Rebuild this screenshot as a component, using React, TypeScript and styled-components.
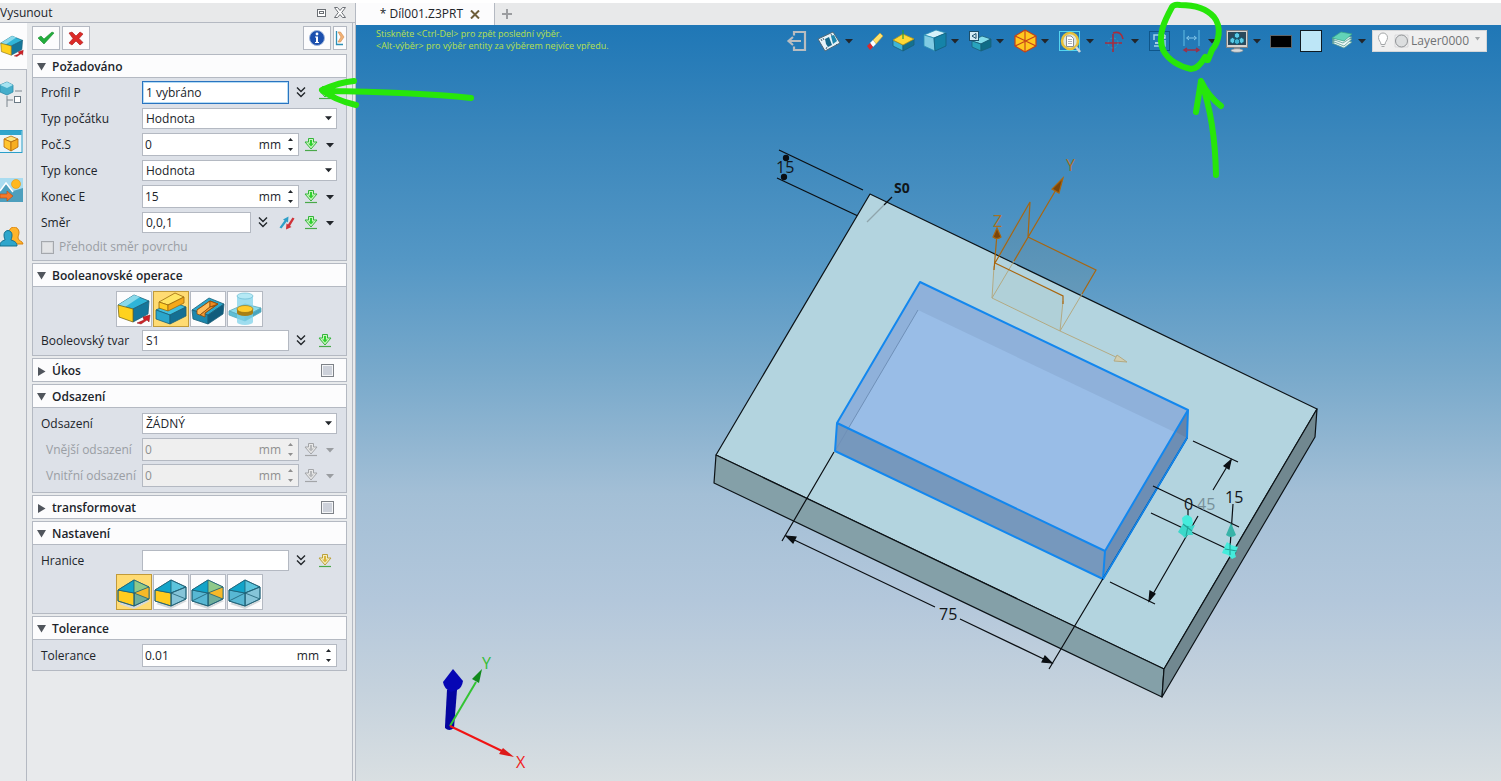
import React, { useState } from 'react';
import styled, { createGlobalStyle, css } from 'styled-components';

const GlobalStyle = createGlobalStyle`
  * { box-sizing: border-box; }
  body { margin: 0; background: #fff; }
  button, input, select { font: inherit; color: inherit; margin: 0; padding: 0; }
`;

const line = '#b4b9c2';

/* ---------- page frame ---------- */

const Page = styled.div`
  position: relative;
  display: flex;
  min-height: 100vh;
  padding-top: 3px;
  font-family: 'Open Sans', 'Noto Sans', sans-serif;
  font-size: 12px;
  line-height: 16px;
  color: #20242a;
`;

const Panel = styled.aside`
  flex: none;
  width: 356px;
  display: flex;
  flex-direction: column;
  background: #e8eaec;
  border-right: 1px solid ${line};
`;

const TitleBar = styled.header`
  display: flex;
  align-items: center;
  height: 20px;
  padding-right: 6px;
  border-bottom: 1px solid ${line};
  background: #e8e9ea;
`;

const Title = styled.h1`
  flex: 1;
  margin: 0;
  font-size: 12px;
  font-weight: 400;
`;

const BareButton = styled.button<{ $w?: number }>`
  flex: none;
  display: flex;
  align-items: center;
  justify-content: center;
  width: ${(p) => p.$w ?? 24}px;
  border: 0;
  background: none;
  cursor: pointer;
`;

const PanelMain = styled.div`
  flex: 1;
  display: flex;
`;

const Rail = styled.nav`
  flex: none;
  width: 27px;
  display: flex;
  flex-direction: column;
  border-right: 1px solid ${line};
`;

const RailTab = styled.button<{ $active?: boolean }>`
  display: flex;
  align-items: center;
  justify-content: flex-start;
  height: ${(p) => (p.$active ? 47 : 48)}px;
  border: 0;
  cursor: pointer;
  background: ${(p) => (p.$active ? '#fcfcfd' : 'transparent')};
  ${(p) => p.$active && css`margin-right: -1px; border-bottom: 1px solid ${line};`}
`;

const Form = styled.form`
  flex: 1;
  min-width: 0;
  display: flex;
  flex-direction: column;
  gap: 2px;
  margin-right: 2px;
  padding: 3px 5px;
  border-right: 1px solid ${line};
`;

const Actions = styled.div`
  display: flex;
  gap: 2px;
  height: 26px;
  padding-bottom: 2px;
`;

const ActionButton = styled.button<{ $w?: number; $push?: boolean }>`
  display: flex;
  align-items: center;
  justify-content: center;
  width: ${(p) => p.$w ?? 28}px;
  border: 1px solid ${line};
  background: #fcfcfd;
  cursor: pointer;
  ${(p) => p.$push && css`margin-left: auto;`}
`;

/* ---------- sections and fields ---------- */

const SectionBox = styled.section`
  border: 1px solid ${line};
  background: #dde1e8;
`;

const SectionHead = styled.div<{ $open: boolean }>`
  display: flex;
  align-items: center;
  height: ${(p) => (p.$open ? 23 : 22)}px;
  padding-right: 12px;
  background: #fcfcfd;
  border-bottom: ${(p) => (p.$open ? `1px solid ${line}` : '0')};
`;

const SectionToggle = styled.button`
  flex: 1;
  display: flex;
  align-items: center;
  gap: 6px;
  padding: 2px 0 0 4px;
  border: 0;
  background: none;
  font-weight: 600;
  text-align: left;
  cursor: pointer;
`;

const SectionBody = styled.div<{ $top: number; $bottom: number }>`
  display: flex;
  flex-direction: column;
  gap: 1px;
  padding: ${(p) => p.$top}px 9px ${(p) => p.$bottom}px 8px;
`;

const Row = styled.div<{ $off?: boolean }>`
  display: flex;
  align-items: center;
  height: 25px;
  color: ${(p) => (p.$off ? '#9a9ea4' : 'inherit')};
`;

const Label = styled.label<{ $indent?: boolean }>`
  flex: none;
  width: 101px;
  padding-left: ${(p) => (p.$indent ? 5 : 0)}px;
  white-space: nowrap;
`;

const fieldLook = css`
  border: 1px solid ${line};
  border-radius: 0;
  background: #fff;
  outline: none;
`;

const TextBox = styled.input<{ $active?: boolean }>`
  ${fieldLook}
  flex: 1;
  min-width: 0;
  height: ${(p) => (p.$active ? 23 : 21)}px;
  padding-left: 3px;
  ${(p) => p.$active && css`border-color: #2a74c0; box-shadow: inset 0 0 0 1px #b4dcf6;`}
`;

const SelectWrap = styled.div`
  flex: 1;
  min-width: 0;
  position: relative;
  display: flex;
  svg { position: absolute; right: 5px; top: 7px; pointer-events: none; }
`;

const SelectBox = styled.select`
  ${fieldLook}
  flex: 1;
  min-width: 0;
  height: 21px;
  padding-left: 3px;
  appearance: none;
`;

const SpinWrap = styled.div<{ $off?: boolean }>`
  ${fieldLook}
  flex: 1;
  min-width: 0;
  display: flex;
  align-items: center;
  height: 23px;
  padding: 0 2px;
  background: ${(p) => (p.$off ? '#efefef' : '#fff')};
  color: ${(p) => (p.$off ? '#8f8f8f' : 'inherit')};
`;

const SpinInput = styled.input`
  flex: 1;
  min-width: 0;
  border: 0;
  background: none;
  outline: none;
`;

const SpinButtons = styled.div`
  display: flex;
  flex-direction: column;
  gap: 2px;
  margin-left: 4px;
`;

const SpinButton = styled.button`
  display: flex;
  align-items: center;
  justify-content: center;
  width: 11px;
  height: 8px;
  border: 0;
  background: none;
`;

const CheckRow = styled.label`
  display: flex;
  align-items: center;
  gap: 5px;
  height: 22px;
  color: #9a9ea4;
`;

const Check = styled.input<{ $framed?: boolean }>`
  appearance: none;
  flex: none;
  width: 13px;
  height: 13px;
  border: 1px solid ${(p) => (p.$framed ? '#7e8288' : '#a5a8ad')};
  background: ${(p) => (p.$framed ? '#cdd1da' : '#e3e4e6')};
  box-shadow: inset 0 0 0 1px ${(p) => (p.$framed ? '#f4f5f7' : '#d6d8db')};
`;

const Choices = styled.div`
  display: flex;
  justify-content: center;
  gap: 1px;
`;

const Choice = styled.button<{ $on?: boolean }>`
  width: 36px;
  height: 36px;
  border: 1px solid ${(p) => (p.$on ? '#c19a3a' : line)};
  background: ${(p) => (p.$on ? '#ffdb73' : '#fcfcfd')};
  cursor: pointer;
  svg { display: block; }
`;

/* ---------- work area ---------- */

const Work = styled.main`
  flex: 1;
  min-width: 0;
  display: flex;
  flex-direction: column;
`;

const TabBar = styled.div`
  display: flex;
  height: 22px;
  background: #e8e9ea;
`;

const FileTab = styled.div`
  display: flex;
  align-items: center;
  justify-content: flex-end;
  gap: 2px;
  width: 139px;
  padding-right: 9px;
  background: #fcfcfd;
  border-right: 1px solid ${line};
`;

const Viewport = styled.div`
  flex: 1;
  position: relative;
  display: flex;
  align-items: flex-start;
  justify-content: space-between;
  padding: 3px 14px 0 20px;
  background: linear-gradient(#1f77b6 0%, #3b87bc 15%, #5497c5 31%, #78a9cb 46%, #a3bfd6 62%, #b3c7db 76%, #c5d2dd 88%, #d9dfe2 100%);
`;

const Scene = styled.svg`
  position: absolute;
  inset: 0;
  width: 100%;
  height: 100%;
`;

const Hint = styled.p`
  position: relative;
  margin: 0;
  font-size: 9px;
  line-height: 12px;
  color: #b8e04e;
  white-space: nowrap;
`;

const Tools = styled.div`
  position: relative;
  display: flex;
  align-items: center;
  gap: 5px;
  height: 26px;
`;

const Cluster = styled.div`
  display: flex;
  align-items: center;
  gap: 8px;
`;

const ToolGroup = styled.div`
  display: flex;
  align-items: center;
  gap: 3px;
`;

const Swatch = styled.button<{ $color: string; $h: number; $edge: string }>`
  width: 22px;
  height: ${(p) => p.$h}px;
  border: 1px solid ${(p) => p.$edge};
  background: ${(p) => p.$color};
`;

const LayerPicker = styled.div`
  position: relative;
  display: flex;
  width: 115px;
  svg { position: absolute; top: 2px; left: 4px; pointer-events: none; }
`;

const LayerSelect = styled.select`
  flex: 1;
  height: 22px;
  padding-left: 38px;
  border: 1px solid #d4d6d8;
  border-radius: 0;
  background: #efefef;
  color: #6f7274;
  appearance: none;
`;

const PanelMark = styled.svg`
  position: absolute;
  left: 312px;
  top: 72px;
  pointer-events: none;
`;

const ToolMark = styled.svg`
  position: absolute;
  right: 271px;
  top: 0;
  pointer-events: none;
`;

/* ---------- small glyphs ---------- */

const Caret = ({ w = 8, color = '#22262b' }: { w?: number; color?: string }) => (
  <svg width={w} height="6" viewBox="0 0 8 6"><path d="M0 1h8L4 5.500z" fill={color} /></svg>
);

const Chevrons = () => (
  <svg width="10" height="13" viewBox="0 0 10 13" fill="none" stroke="#22262b" strokeWidth="1.400">
    <path d="M1 1.500l4 4 4-4M1 6.500l4 4 4-4" />
  </svg>
);

const palettes = {
  green: ['#c9f5bd', '#35b53c', '#2fd030'],
  grey: ['#e8e8e8', '#a3a5a8', '#b5b7b9'],
  gold: ['#f5ecc0', '#bba23a', '#d9b63a'],
};

const PickArrow = ({ tone = 'green' }: { tone?: keyof typeof palettes }) => {
  const [light, edge, core] = palettes[tone];
  return (
    <svg width="14" height="15" viewBox="0 0 14 15">
      <path d="M4.500 1.500h5V5H13l-6 7-6-7h3.500z" fill={light} stroke={edge} />
      <path d="M6 3h2v3.500h1.800L7 9.500 4.200 6.500H6z" fill={core} />
      <path d="M1 13.500h12" stroke={tone === 'grey' ? '#a3a5a8' : '#4aa84a'} strokeWidth="1.200" />
    </svg>
  );
};

const FlipArrows = () => (
  <svg width="16" height="14" viewBox="0 0 16 14">
    <path d="M.5 11.500L5.500 4.500 4 3.500 9.500.5 9 6.500 7.700 5.500 2.500 12.500z" fill="#2f9fc8" />
    <path d="M13.500 1.500L9 8.500 7.500 7.500 7 13.500 12.500 11 11 10 15.500 2.500z" fill="#d03238" />
  </svg>
);

const P = ({ d, f, s = '#1b5f78', w = 0.8 }: { d: string; f: string; s?: string; w?: number }) => (
  <polygon points={d} fill={f} stroke={s} strokeWidth={w} strokeLinejoin="round" />
);

/* ---------- boolean operation icons ---------- */

const BoolBase = ({ size = 34 }: { size?: number }) => (
  <svg width={size} height={size} viewBox="1 1 34 34">
    <P d="2,14 18,4 33,10 17,18" f="#2fb5d8" />
    <P d="2,14 18,4 24,6 9,16" f="#8ad9ea" s="none" />
    <P d="17,18 33,10 32,23 17,31" f="#15779b" />
    <P d="2,14 17,18 17,31 3,26" f="#ffd21f" s="#7a6a1a" />
    <path d="M21 32l7-3-1-3 7-2-1 7-2-2-6 4z" fill="#cf2026" stroke="#8a1215" strokeWidth=".5" />
  </svg>
);

const BoolAdd = () => (
  <svg width="34" height="34" viewBox="1 1 34 34">
    <P d="3,19 20,11 33,16 17,24" f="#3fbfe0" />
    <P d="3,19 17,24 17,33 3,28" f="#2aa6cc" />
    <P d="17,24 33,16 33,25 17,33" f="#146f93" />
    <P d="6,11 22,2 31,6 15,14" f="#ffe565" s="#9c6a0c" />
    <P d="6,11 15,14 15,20 6,17" f="#ffcf2a" s="#9c6a0c" />
    <P d="15,14 31,6 31,12 15,20" f="#f5a81a" s="#9c6a0c" />
  </svg>
);

const BoolCut = () => (
  <svg width="34" height="34" viewBox="1 1 34 34">
    <P d="2,19 19,7 34,13 18,24" f="#2ba5c9" />
    <P d="2,19 18,24 18,33 3,28" f="#1b87ac" />
    <P d="18,24 34,13 33,23 18,33" f="#105c7c" />
    <P d="7,19 20,10 28,13 15,22" f="#c9630f" s="#6e3a08" />
    <P d="7,19 20,10 20,16 10,24 7,23" f="#ffbd5c" s="#8a4c0c" />
    <P d="20,10 28,13 20,16" f="#f08c20" s="#8a4c0c" />
    <P d="10,24 20,16 25,15 15,22 15,26" f="#f29a35" s="#8a4c0c" />
  </svg>
);

const BoolIntersect = () => (
  <svg width="34" height="34" viewBox="1 1 34 34">
    <P d="2,20 18,13 34,17 18,26" f="#8ddbea" s="#5aa9bb" />
    <P d="2,20 18,26 18,30 2,24" f="#5fbfd6" s="#5aa9bb" />
    <P d="18,26 34,17 34,21 18,30" f="#47a6c0" s="#5aa9bb" />
    <path d="M10 5v26a8 3 0 0 0 16 0V5z" fill="#7fd3ea" fillOpacity=".75" />
    <ellipse cx="18" cy="5" rx="8" ry="3" fill="#b5e9f5" stroke="#5fb5cc" strokeWidth=".6" />
    <path d="M10 18v4a8 3 0 0 0 16 0v-4z" fill="#a87f14" />
    <ellipse cx="18" cy="18" rx="8" ry="3.500" fill="#ffcc2e" stroke="#8a6a10" strokeWidth=".6" />
  </svg>
);

/* ---------- box with open or closed end caps ---------- */

type CapProps = { front: boolean; back: boolean };
const CapBox = ({ front, back }: CapProps) => (
  <svg width="34" height="34" viewBox="1 1 34 34">
    <P d="3,30 18,35 34,27 18,22" f="#d3d8db" s="none" />
    <P d="2,16 18,6 33,13 18,19" f="#5cc4dc" />
    <P d="18,19 33,13 33,25 18,32" f={back ? '#6fae9a' : '#86c4d8'} />
    <P d="2,16 18,19 18,32 2,27" f={front ? '#ffcc1f' : '#58b7d3'} />
    <P d="2,16 18,6 18,19" f="#12a4c9" s="none" />
    {back && <P d="18,6 33,13 18,19" f="#8fc98a" s="none" />}
    {back && <P d="18,19 33,13 33,25" f="#f7b928" s="none" />}
    <g stroke="#1f5f73" strokeWidth=".8" fill="none">
      <path d="M2 16L18 6l15 7-15 6zM18 19v13M18 6v13M18 19l15 6M2 16v11l16 5 15-7V13" />
      {!front && <path d="M2 27l16-8" />}
    </g>
  </svg>
);

/* ---------- side rail icons ---------- */

const RailTree = () => (
  <svg width="23" height="26" viewBox="0 0 23 26">
    <P d="0,4 7,1 13,4 13,11 7,14 0,11" f="#45aecb" s="#2b8aa8" />
    <P d="0,4 7,1 13,4 7,7" f="#a5e3f1" s="none" />
    <path d="M15 10h7M7 15v11M7 19h6" stroke="#7c868e" fill="none" />
    <rect x="14.500" y="15.500" width="6" height="6" fill="#fff" stroke="#6b7a85" />
  </svg>
);

const RailWindow = () => (
  <svg width="23" height="24" viewBox="0 0 23 24">
    <rect x="-1" y=".5" width="23" height="22" fill="#e9f5fa" stroke="#2b9fc9" />
    <rect x="-1" y="1" width="22.500" height="4" fill="#2fa5cc" />
    <P d="4,9 11,6 18,9 11,12" f="#ffe47a" s="#b5680c" />
    <P d="4,9 11,12 11,21 4,17" f="#ffc62f" s="#b5680c" />
    <P d="11,12 18,9 18,17 11,21" f="#f7ae22" s="#b5680c" />
  </svg>
);

const RailImage = () => (
  <svg width="23" height="24" viewBox="0 0 23 24">
    <rect width="23" height="24" fill="#a9dcf0" />
    <path d="M0 13l6-8 7 8 10-3v14H0z" fill="#4d9fbd" />
    <path d="M0 13l6-8 7 9" fill="none" stroke="#fff" strokeWidth="1.500" />
    <circle cx="16" cy="6" r="4.500" fill="#ffb81f" stroke="#e8940c" strokeWidth=".6" />
    <path d="M0 16h7v-3l6 5-6 5v-3H0z" fill="#f37a2a" stroke="#b84a10" strokeWidth=".6" />
  </svg>
);

const RailUsers = () => (
  <svg width="24" height="22" viewBox="0 0 24 22">
    <path d="M9 6a5 5.500 0 0 1 10-1c0 3-1 4-1 6 0 3 5 3 5 6H11z" fill="#ffb42b" stroke="#d88310" />
    <path d="M4 8a4 4.500 0 1 1 8 0c0 3-1 4-1 5 3 1 6 2 6 6H0c0-4 2-5 5-6 0-1-1-2-1-5z" fill="#2ea6cc" stroke="#14708f" />
  </svg>
);

/* ---------- view toolbar icons ---------- */

const toolIcons: Record<string, React.ReactNode> = {
  exit: (
    <path d="M9 6.500V3h11v18H9v-3.500M16 12H3M8 8L3.500 12 8 16" fill="none" stroke="#b9bdc0" strokeWidth="2.200" />
  ),
  viewer: (
    <g>
      <path d="M1 10l15-7 7 11-15 8z" fill="#e6f2f8" stroke="#4f6876" />
      <path d="M4 10l1 2M6 9l1 2M14 5l1 2M9 20l1-2M19 15l1 1" stroke="#4f6876" />
      <path d="M8 10l4-2 3 8-4 2-2-3z" fill="#14688c" />
      <path d="M14 7l3-1 3 6-4 3z" fill="#1d86ad" />
    </g>
  ),
  eraser: (
    <g>
      <path d="M11 11l7-7 3 3-7 8z" fill="#ffe26b" stroke="#c79a2a" strokeWidth=".6" />
      <path d="M8 14l3-3 3 4-3 3z" fill="#fff" />
      <path d="M5 17l3-3 3 4-3 3z" fill="#d8282c" />
    </g>
  ),
  plane: (
    <g>
      <P d="2,11 12,16 12,22 2,17" f="#3fb4d6" />
      <P d="12,16 23,10 23,16 12,22" f="#14718f" />
      <P d="2,11 12,5 23,10 12,16" f="#ffd935" s="#b39416" />
      <path d="M12 1v9" stroke="#2a9a3c" strokeWidth="1.200" />
    </g>
  ),
  shaded: (
    <g>
      <P d="1,6 13,1 23,4 11,9" f="#d5f2fa" s="#2a90b5" />
      <P d="1,6 11,9 12,22 1,17" f="#7fcbe3" s="#2a90b5" />
      <P d="11,9 23,4 23,17 12,22" f="#1583a8" s="#145f7c" />
    </g>
  ),
  align: (
    <g>
      <P d="4,12 14,7 23,10 13,15" f="#83dcea" />
      <P d="4,12 13,15 13,22 4,18" f="#28a3bd" />
      <P d="13,15 23,10 23,18 13,22" f="#0f6c86" />
      <rect x="1.500" y="2.500" width="9" height="9" fill="#d5ebf5" stroke="#1c4f6b" />
      <path d="M8 4.500v5L4 7z" fill="none" stroke="#1c4f6b" />
    </g>
  ),
  wire: (
    <g>
      <P d="2,7 12,1 23,7 23,17 12,23 2,17" f="#ffc81e" s="#c4421a" w={1.2} />
      <path d="M2 7l21 10M23 7L2 17M12 1v22" stroke="#c4421a" strokeWidth="1.100" />
    </g>
  ),
  zoom: (
    <g>
      <rect x="1.500" y="2.500" width="20" height="19" fill="none" stroke="#54d5ef" />
      <circle cx="12" cy="12" r="8" fill="#dfe5e0" stroke="#e8c13a" strokeWidth="2.500" />
      <path d="M8.500 7h4.500l2.500 2.500v8h-7z" fill="#fff" stroke="#8a8f93" />
      <path d="M10 10.500h4M10 12.500h4M10 14.500h4" stroke="#9a9fa3" strokeWidth=".8" />
      <path d="M18 18l4 5" stroke="#d3d6d8" strokeWidth="2.500" />
    </g>
  ),
  rotate: (
    <g fill="none" stroke="#a92c3c" strokeWidth="1.600">
      <path d="M2 14h17M10 5v18" />
      <circle cx="10" cy="14" r="5" stroke="#2e9dc0" strokeWidth=".9" strokeDasharray="2 2" />
      <path d="M10 4c6-2 9 1 10 6" />
    </g>
  ),
  sketch: (
    <g fill="none">
      <rect x="1.500" y="2.500" width="20" height="19" stroke="#0f568a" />
      <path d="M17 6H6v5M6 17h11v-6" stroke="#9fd3ea" strokeWidth="1.500" />
      <path d="M13 9h4V6M7 14h5" stroke="#d3e9f5" strokeWidth="1.300" />
    </g>
  ),
  dimension: (
    <g fill="none">
      <path d="M4 1v16M19 1v16" stroke="#4fa9d6" strokeWidth="1.400" />
      <path d="M7 9h9M9 7L6.500 9 9 11M14 7l2.500 2-2.500 2" stroke="#86c9ea" />
      <path d="M4 21h15M7 19l-3 2 3 2M16 19l3 2-3 2" stroke="#9c3048" strokeWidth="1.500" />
    </g>
  ),
  monitor: (
    <g>
      <rect x="1.500" y="1.500" width="21" height="17" fill="#d6d3cf" stroke="#7b8185" />
      <rect x="3" y="3" width="18" height="13" fill="#2b4a5c" />
      <P d="9.500,5 12,3.500 14.500,5 14.500,8 12,9.500 9.500,8" f="#5ccbe6" s="#0d5570" />
      <P d="5,10 7.500,8.500 10,10 10,13 7.500,14.500 5,13" f="#5ccbe6" s="#0d5570" />
      <P d="14,10 16.500,8.500 19,10 19,13 16.500,14.500 14,13" f="#5ccbe6" s="#0d5570" />
      <P d="9.500,11 12,9.500 14.500,11 14.500,14 12,15.500 9.500,14" f="#3fb4d2" s="#0d5570" />
      <path d="M9 18.500h6v2H9z" fill="#8d9296" />
      <ellipse cx="12" cy="21.500" rx="6" ry="1.800" fill="#d7dadc" stroke="#7b8185" strokeWidth=".6" />
    </g>
  ),
  layers: (
    <g>
      <P d="2,14 14,19 22,13 12,10" f="#eef8f6" s="#5a9d93" />
      <P d="2,12 14,17 22,10 12,9" f="#eef8f6" s="#5a9d93" />
      <P d="2,10 13,14 22,8 12,7" f="#eef8f6" s="#5a9d93" />
      <P d="2,9 11,3 22,5 14,12" f="#62d3b8" s="#3aa48a" />
    </g>
  ),
};

const Tool = ({ icon, label, menu }: { icon: string; label: string; menu?: boolean }) => (
  <ToolGroup>
    <BareButton type="button" aria-label={label}>
      <svg width="24" height="24" viewBox="0 0 24 24">{toolIcons[icon]}</svg>
    </BareButton>
    {menu && (
      <BareButton type="button" $w={10} aria-label={`${label} – nabídka`}><Caret /></BareButton>
    )}
  </ToolGroup>
);

/* ---------- composed fields ---------- */

const Section = ({ title, open: initial = true, checkable, top = 3, bottom = 2, children }: {
  title: string; open?: boolean; checkable?: boolean; top?: number; bottom?: number; children?: React.ReactNode;
}) => {
  const [open, setOpen] = useState(initial);
  return (
    <SectionBox>
      <SectionHead $open={open && !!children}>
        <SectionToggle type="button" aria-expanded={open} onClick={() => setOpen(!open)}>
          <svg width="9" height="9" viewBox="0 0 9 9">
            <path d={open ? 'M0 0h9L4.500 7.500z' : 'M1 0l7.500 4.500L1 9z'} fill="#50555c" />
          </svg>
          {title}
        </SectionToggle>
        {checkable && <Check type="checkbox" $framed aria-label={title} />}
      </SectionHead>
      {open && children && <SectionBody $top={top} $bottom={bottom}>{children}</SectionBody>}
    </SectionBox>
  );
};

const Dropdown = ({ id, label, value }: { id: string; label: string; value: string }) => (
  <Row>
    <Label htmlFor={id}>{label}</Label>
    <SelectWrap>
      <SelectBox id={id} defaultValue={value}><option>{value}</option></SelectBox>
      <Caret w={7} />
    </SelectWrap>
  </Row>
);

const Spin = ({ id, label, value, off, plain }: {
  id: string; label: string; value: string; off?: boolean; plain?: boolean;
}) => {
  const ink = off ? '#8f8f8f' : '#22262b';
  return (
    <Row $off={off}>
      <Label htmlFor={id} $indent={off}>{label}</Label>
      <SpinWrap $off={off}>
        <SpinInput id={id} defaultValue={value} disabled={off} />
        mm
        <SpinButtons>
          <SpinButton type="button" aria-label="Zvýšit" disabled={off}>
            <svg width="5" height="3" viewBox="0 0 5 3"><path d="M0 3h5L2.500 0z" fill={ink} /></svg>
          </SpinButton>
          <SpinButton type="button" aria-label="Snížit" disabled={off}>
            <svg width="5" height="3" viewBox="0 0 5 3"><path d="M0 0h5L2.500 3z" fill={ink} /></svg>
          </SpinButton>
        </SpinButtons>
      </SpinWrap>
      {!plain && <PickMenu off={off} />}
    </Row>
  );
};

const PickMenu = ({ off }: { off?: boolean }) => (
  <>
    <BareButton type="button" aria-label="Vybrat" disabled={off}><PickArrow tone={off ? 'grey' : 'green'} /></BareButton>
    <BareButton type="button" $w={14} aria-label="Možnosti" disabled={off}>
      <Caret color={off ? '#9a9da1' : undefined} />
    </BareButton>
  </>
);

const Expand = () => <BareButton type="button" aria-label="Rozbalit"><Chevrons /></BareButton>;

/* ---------- model ---------- */

const Model = () => (
  <Scene viewBox="356 25 1145 756" preserveAspectRatio="xMidYMid meet" role="img" aria-label="Model dílu">
    <defs>
      <clipPath id="boxTop"><polygon points="920,282 1188,410 1105,551 837,423" /></clipPath>
    </defs>

    {/* thickness dimension at the far corner */}
    <g stroke="#0b0f13" strokeWidth="1.300" fill="none">
      <path d="M779 150L863 190M777 178L858 216" />
      <circle cx="786" cy="158" r="2.500" fill="#0b0f13" />
      <circle cx="784" cy="177" r="2.500" fill="#0b0f13" />
    </g>

    {/* plate */}
    <g stroke="#0c1216" strokeWidth="1.200" strokeLinejoin="round">
      <polygon points="870,194 1317,409 1164,669 716,455" fill="#b3d4df" />
      <polygon points="716,455 1164,669 1162,697 714,483" fill="#84a0a8" />
      <polygon points="1317,409 1315,437 1162,697 1164,669" fill="#718890" />
    </g>

    {/* datum planes */}
    <g fill="#8a8468" fillOpacity=".13">
      <polygon points="1014,262 1028,237 1096,270 1082,295" />
      <polygon points="996,254 1030,202 1028,237 1014,262" />
      <polygon points="992,298 995,263 1063,296 1060,331" fillOpacity=".05" />
    </g>
    <g stroke="#b3aa83" strokeWidth="1" fill="none">
      <path d="M1014 261L992 298l68 33 22-37M992 298l2-32M1060 331l3-30M1060 331l58 27" />
      <path d="M1127 362l-13-1 3-6z" fill="#d0cdb0" />
    </g>
    <g stroke="#a9660f" strokeWidth="1.200" fill="none">
      <path d="M1014 261L1060 183M1028 237l68 33-14 24M1028 237l2-35-35 61M994 270l3-36M995 263l68 33v8" />
      <path d="M1063 178l-11 11 7 4zM997 228l-4 9q4 3 8 0z" fill="#7a450a" />
    </g>

    {/* extruded block */}
    <polygon points="837,423 1105,551 1103,579 835,451" fill="#7698bd" />
    <polygon points="1188,410 1187,438 1103,579 1105,551" fill="#6d8eb4" />
    <polygon points="920,282 1188,410 1105,551 837,423" fill="#8fb1da" />
    <polygon points="918,310 1187,438 1103,579 835,451" fill="#99bde7" clipPath="url(#boxTop)" />
    <path d="M1188 410l-1 28-11-6z" fill="#6784a8" />
    <path d="M918 310L835 451" stroke="#6f90b8" strokeWidth="1" />
    <path d="M920 282l268 128-1 28-84 141-268-128 2-28zM837 423l268 128-2 28M1105 551l83-141" fill="none" stroke="#1387ee" strokeWidth="2" strokeLinejoin="round" />

    {/* width dimension */}
    <g stroke="#0b0f13" strokeWidth="1.200" fill="none">
      <path d="M834 452L782 541M1187 438L1049 669M786 536l149 71M960 619l92 44" />
      <path d="M786 536l10 1-3 6zM1052 663l-10-1 3-6z" fill="#0b0f13" />
    </g>
    <path d="M1187 438L1103 579" stroke="#1387ee" strokeWidth="1.500" />

    {/* depth dimension */}
    <g stroke="#0b0f13" strokeWidth="1.200" fill="none">
      <path d="M1193 441l45 21M1213 490l18-30M1198 516l-49 85M1110 582l45 22M1153 486l86 41M1151 513l85 40" />
      <path d="M1231 460l-2 9-5-3zM1149 601l1-10 5 3z" fill="#0b0f13" />
      <path d="M1233 504l-3 44M1188 510v12" />
    </g>
    <g>
      <path d="M1231 523l5 12q-5 4-10 0z" fill="#38b3a8" />
      <path d="M1222 553l3-7 2-4 4 3 7 2-3 7 1 3-4 2-4-4z" fill="#45ecdc" />
      <path d="M1230 543v12M1225 549l12 2" stroke="#1fa295" strokeWidth="1.100" />
      <path d="M1182 518q5-6 10 0l1 6-5 3-5-2z" fill="#45ecdc" />
      <path d="M1178 532l5-8 5 2 7-1-3 6 1 4-5 0-3 3-3-3z" fill="#3bd8ca" />
      <path d="M1183 524l9 7M1186 536l2-10" stroke="#1fa295" strokeWidth="1.100" />
    </g>

    <path d="M892 197l-8 8" stroke="#0b0f13" strokeWidth="1.300" />
    <path d="M884 205l-17 17" stroke="#8fa5ac" strokeWidth="1.200" />

    <g fontFamily="'Open Sans','Noto Sans',sans-serif" fontSize="16" fill="#11161a">
      <text x="776" y="173">15</text>
      <text x="894" y="193" fontSize="14" fontWeight="700">S0</text>
      <text x="939" y="620">75</text>
      <text x="1184" y="510">0</text>
      <text x="1197" y="510" fill="#78919a">45</text>
      <text x="1225" y="503">15</text>
      <text x="1066" y="171" fill="#a9701f">Y</text>
      <text x="993" y="227" fill="#a9701f">Z</text>
      <text x="482" y="669" fill="#35bd35">Y</text>
      <text x="516" y="768" fill="#f02020">X</text>
    </g>

    {/* orientation triad */}
    <g>
      <path d="M445 726l2-36h10l-3 38q-5 4-9 0z" fill="#0505a0" />
      <path d="M453 669l10 12q-1 7-6 9l-6 2q-7-3-8-10z" fill="#0606b4" />
      <path d="M450 726l26-44" stroke="#33c433" strokeWidth="2" />
      <path d="M482 669l-3 14-7-4z" fill="#118a1c" />
      <path d="M450 726l52 25" stroke="#f01414" strokeWidth="2" />
      <path d="M514 757l-11-9-4 6z" fill="#dd1a1a" />
    </g>
  </Scene>
);

/* ---------- application ---------- */

export default function App() {
  return (
    <Page>
      <GlobalStyle />
      <Panel>
        <TitleBar>
          <Title>Vysunout</Title>
          <BareButton type="button" $w={19} aria-label="Ukotvit">
            <svg width="9" height="8" viewBox="0 0 9 8" fill="#fff" stroke="#6b6f74">
              <rect x=".5" y=".5" width="8" height="7" /><rect x="2.500" y="2.500" width="4" height="2" />
            </svg>
          </BareButton>
          <BareButton type="button" $w={18} aria-label="Zavřít panel">
            <svg width="12" height="11" viewBox="0 0 12 11" fill="#fff" stroke="#6b6f74">
              <path d="M.5.5h3L6 3.500 8.500.5h3L7.700 5.500l3.800 5h-3L6 7.500l-2.500 3h-3l3.800-5z" />
            </svg>
          </BareButton>
        </TitleBar>
        <PanelMain>
          <Rail>
            <RailTab type="button" $active aria-label="Vysunout"><BoolBase size={24} /></RailTab>
            <RailTab type="button" aria-label="Historie"><RailTree /></RailTab>
            <RailTab type="button" aria-label="Vzhled"><RailWindow /></RailTab>
            <RailTab type="button" aria-label="Obrázek"><RailImage /></RailTab>
            <RailTab type="button" aria-label="Uživatelé"><RailUsers /></RailTab>
          </Rail>
          <Form onSubmit={(e) => e.preventDefault()}>
            <Actions>
              <ActionButton type="submit" aria-label="Potvrdit">
                <svg width="18" height="14" viewBox="0 0 18 14"><path d="M1 7l3-2 3 3 8-7 2 1L7 13z" fill="#22ad3c" stroke="#178a2c" strokeWidth=".6" /></svg>
              </ActionButton>
              <ActionButton type="button" aria-label="Zrušit">
                <svg width="16" height="15" viewBox="0 0 16 15"><path d="M1 2l3-1 4 4 4-4 3 2-4 4.500 4 4-3 2.500-4-4-4 4-3-2 4-4.500z" fill="#dc2a28" stroke="#a81616" strokeWidth=".6" /></svg>
              </ActionButton>
              <ActionButton type="button" $push aria-label="Informace">
                <svg width="18" height="18" viewBox="0 0 18 18">
                  <circle cx="9" cy="9" r="7.500" fill="#1b4fae" stroke="#9fb6dc" />
                  <circle cx="9" cy="5" r="1.400" fill="#fff" />
                  <path d="M7 7.500h3V13h1v1H7v-1h1V8.500H7z" fill="#fff" />
                </svg>
              </ActionButton>
              <ActionButton type="button" $w={14} aria-label="Náhled">
                <svg width="10" height="16" viewBox="0 0 10 16">
                  <path d="M1.500 1v13.500H8" fill="none" stroke="#2c8fb5" strokeWidth="1.300" />
                  <path d="M3 2h2.500L9 7l-3.500 5H3l3-5z" fill="#f2b277" stroke="#d08a4a" strokeWidth=".6" />
                </svg>
              </ActionButton>
            </Actions>

            <Section title="Požadováno" top={2}>
              <Row>
                <Label htmlFor="profil">Profil P</Label>
                <TextBox id="profil" defaultValue="1 vybráno" $active />
                <Expand />
                <BareButton type="button" aria-label="Vybrat profil"><PickArrow /></BareButton>
              </Row>
              <Dropdown id="typ-pocatku" label="Typ počátku" value="Hodnota" />
              <Spin id="poc" label="Poč.S" value="0" />
              <Dropdown id="typ-konce" label="Typ konce" value="Hodnota" />
              <Spin id="konec" label="Konec E" value="15" />
              <Row>
                <Label htmlFor="smer">Směr</Label>
                <TextBox id="smer" defaultValue="0,0,1" />
                <Expand />
                <BareButton type="button" aria-label="Obrátit směr"><FlipArrows /></BareButton>
                <PickMenu />
              </Row>
              <CheckRow><Check type="checkbox" disabled />Přehodit směr povrchu</CheckRow>
            </Section>

            <Section title="Booleanovské operace" top={4}>
              <Choices>
                <Choice type="button" aria-label="Základ"><BoolBase /></Choice>
                <Choice type="button" $on aria-label="Přidat"><BoolAdd /></Choice>
                <Choice type="button" aria-label="Odebrat"><BoolCut /></Choice>
                <Choice type="button" aria-label="Průnik"><BoolIntersect /></Choice>
              </Choices>
              <Row>
                <Label htmlFor="tvar">Booleovský tvar</Label>
                <TextBox id="tvar" defaultValue="S1" />
                <Expand />
                <BareButton type="button" aria-label="Vybrat tvar"><PickArrow /></BareButton>
              </Row>
            </Section>

            <Section title="Úkos" open={false} checkable />

            <Section title="Odsazení" bottom={4}>
              <Dropdown id="odsazeni" label="Odsazení" value="ŽÁDNÝ" />
              <Spin id="vnejsi" label="Vnější odsazení" value="0" off />
              <Spin id="vnitrni" label="Vnitřní odsazení" value="0" off />
            </Section>

            <Section title="transformovat" open={false} checkable />

            <Section title="Nastavení" bottom={3}>
              <Row>
                <Label htmlFor="hranice">Hranice</Label>
                <TextBox id="hranice" />
                <Expand />
                <BareButton type="button" aria-label="Vybrat hranici"><PickArrow tone="gold" /></BareButton>
              </Row>
              <Choices>
                <Choice type="button" $on aria-label="Oba konce"><CapBox front back /></Choice>
                <Choice type="button" aria-label="Počáteční konec"><CapBox front back={false} /></Choice>
                <Choice type="button" aria-label="Koncový konec"><CapBox front={false} back /></Choice>
                <Choice type="button" aria-label="Bez konců"><CapBox front={false} back={false} /></Choice>
              </Choices>
            </Section>

            <Section title="Tolerance">
              <Spin id="tolerance" label="Tolerance" value="0.01" plain />
            </Section>
          </Form>
        </PanelMain>
      </Panel>

      <Work>
        <TabBar>
          <FileTab>
            * Díl001.Z3PRT
            <BareButton type="button" $w={20} aria-label="Zavřít soubor">
              <svg width="10" height="9" viewBox="0 0 10 9"><path d="M1 .5l8 8M9 .5l-8 8" stroke="#6e5f3c" strokeWidth="2" /></svg>
            </BareButton>
          </FileTab>
          <BareButton type="button" aria-label="Nový soubor">
            <svg width="10" height="10" viewBox="0 0 10 10"><path d="M5 0v10M0 5h10" stroke="#9b9da0" strokeWidth="2" /></svg>
          </BareButton>
        </TabBar>
        <Viewport>
          <Model />
          <Hint>
            Stiskněte &lt;Ctrl-Del&gt; pro zpět poslední výběr.<br />
            &lt;Alt-výběr&gt; pro výběr entity za výběrem nejvíce vpředu.
          </Hint>
          <Tools>
            <Cluster>
              <Tool icon="exit" label="Ukončit" />
              <Tool icon="viewer" label="Prohlížeč" menu />
              <Tool icon="eraser" label="Guma" />
            </Cluster>
            <Cluster>
              <Tool icon="plane" label="Rovina" />
              <Tool icon="shaded" label="Stínování" menu />
              <Tool icon="align" label="Zarovnat pohled" menu />
              <Tool icon="wire" label="Drátový model" menu />
              <Tool icon="zoom" label="Přiblížit" menu />
              <Tool icon="rotate" label="Otočit" menu />
              <Tool icon="sketch" label="Skica" />
              <Tool icon="dimension" label="Kóty" menu />
              <Tool icon="monitor" label="Zobrazení" menu />
              <Swatch type="button" $color="#000" $h={13} $edge="#5e6468" aria-label="Barva čáry" />
              <Swatch type="button" $color="#bde6f7" $h={22} $edge="#0f1a22" aria-label="Barva plochy" />
              <Tool icon="layers" label="Vrstvy" menu />
            </Cluster>
            <LayerPicker>
              <LayerSelect aria-label="Vrstva" defaultValue="Layer0000"><option>Layer0000</option></LayerSelect>
              <svg width="108" height="18" viewBox="0 0 108 18">
                <path d="M5 12.500c0-3-2.500-3.500-2.500-7a4.500 4.500 0 0 1 9 0c0 3.500-2.500 4-2.500 7zM5.500 14.500h3" fill="#fff" stroke="#a3a6a8" />
                <path d="M19 3v12h13V3z" fill="none" stroke="#c9cbcd" strokeWidth=".6" />
                <circle cx="25.500" cy="9" r="6" fill="#dcdedf" stroke="#909396" />
                <path d="M99 5h5l-2.500 3.500z" fill="#a3a6a8" />
              </svg>
            </LayerPicker>
          </Tools>
        </Viewport>
      </Work>

      <PanelMark width="170" height="44" viewBox="312 72 170 44" fill="none" stroke="#27e60a" strokeWidth="6" strokeLinecap="round" strokeLinejoin="round">
        <path d="M471 98Q415 92 323 91M354 81q-14 1-32 9 12 10 34 15" />
      </PanelMark>
      <ToolMark width="80" height="185" viewBox="1150 0 80 185" fill="none" stroke="#27e60a" strokeWidth="6" strokeLinecap="round" strokeLinejoin="round">
        <path d="M1207 60l-2-3C1200 66 1196 69 1191 69 1180 67 1168 60 1163 50 1157 35 1165 20 1172 7Q1174 4 1180 5C1195 5 1207 9 1214 17 1222 27 1219 42 1212 50L1208 60" />
        <path d="M1216 175Q1215 120 1201 81L1196 112M1201 81Q1208 96 1221 106" />
      </ToolMark>
    </Page>
  );
}
